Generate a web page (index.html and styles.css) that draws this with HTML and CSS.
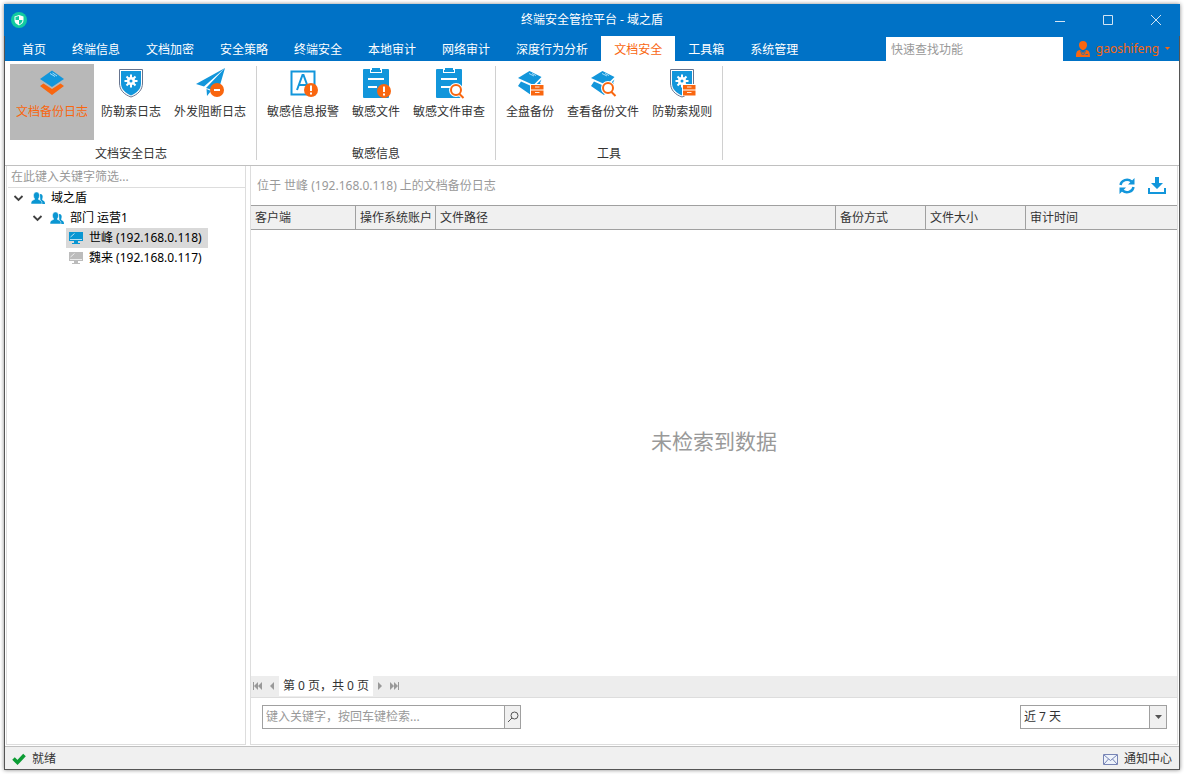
FILE: index.html
```html
<!DOCTYPE html>
<html lang="zh-CN">
<head>
<meta charset="utf-8">
<meta name="viewport" content="width=device-width, initial-scale=1">
<title>终端安全管控平台 - 域之盾</title>
<link rel="stylesheet" href="styles.css">
</head>
<body>
<svg class="defs" aria-hidden="true">
  <defs>
    <symbol id="shield" viewBox="0 0 32 32">
      <path d="M4.500 2.500H27.500V16C27.500 23 23 27.500 16 30C9 27.500 4.500 23 4.500 16Z" fill="#fff" stroke="#66748f" stroke-width="1"/>
      <path d="M6 4H26V16C26 22 22 26 16 28.500C10 26 6 22 6 16Z" fill="#1296db"/>
      <path d="M16 7.500V20.500M9.500 14H22.500M11.500 9.500L20.500 18.500M20.500 9.500L11.500 18.500" stroke="#fff" stroke-width="2"/>
      <circle cx="16" cy="14" r="4" fill="#fff"/>
      <circle cx="16" cy="14" r="1.500" fill="#1296db"/>
    </symbol>
    <symbol id="layers" viewBox="0 0 32 32">
      <path d="M15.500 4L27.500 10L19.500 18L4 11Z" fill="#1296db"/>
      <path d="M7 14.500L19.500 20L27.500 12.500L26 16L27 17L17 28L4 19Z" fill="#1296db"/>
      <path d="M15 6.500L20 9M18 6.500L22 8.500" stroke="#a6dcf7" stroke-width="1"/>
    </symbol>
    <symbol id="clipboard" viewBox="0 0 32 32">
      <path d="M4 2H28Q29 2 29 3V30Q29 31 28 31H4Q3 31 3 30V3Q3 2 4 2Z" fill="#1296db"/>
      <path d="M10 1H12V4H20V1H22V6H10Z" fill="#fff"/>
      <path d="M12 1H20V3H21V5H11V3H12Z" fill="#1296db"/>
      <path d="M8 12H24M8 20H17" stroke="#fff" stroke-width="2"/>
    </symbol>
    <symbol id="alert" viewBox="0 0 14 14">
      <circle cx="7" cy="7" r="7" fill="#f9660f"/>
      <path d="M7 2.500V8M7 9.500V11.500" stroke="#fff" stroke-width="2"/>
    </symbol>
    <symbol id="lens" viewBox="0 0 16 16">
      <path d="M10.500 11L14.500 15" stroke="#fff" stroke-width="4"/>
      <circle cx="7" cy="7" r="5" fill="#fff" stroke="#fff" stroke-width="4"/>
      <circle cx="7" cy="7" r="5" fill="#fff" stroke="#f9660f" stroke-width="2"/>
      <path d="M10.500 11L14.500 15" stroke="#f9660f" stroke-width="2"/>
    </symbol>
    <symbol id="drawer" viewBox="0 0 14 12">
      <path d="M0 0H14V12H0Z" fill="#fff"/>
      <path d="M1 1H13.500V5.500H1ZM1 6.500H13.500V11.500H1Z" fill="#f9660f"/>
      <path d="M5 3H9.500M5 8.500H9.500" stroke="#fff" stroke-width="1" opacity=".85"/>
    </symbol>
    <symbol id="people" viewBox="0 0 14 14">
      <path d="M9 3C11.500 3 12 5 11.500 7C11 8.500 11 9 12 9.500C13.500 10 14 11 14 13H9.500Z" fill="#0a96d2"/>
      <path d="M5.500 1C7.500 1 8.500 2.500 8.500 4.500C8.500 6 8 7 7.500 7.500V8.500C10 9.500 11 10 11 13H0C0 10 1 9.500 3.500 8.500V7.500C3 7 2.500 6 2.500 4.500C2.500 2.500 3.500 1 5.500 1Z" fill="#0a96d2" stroke="#fff" stroke-width=".5"/>
    </symbol>
    <symbol id="monitor" viewBox="0 0 14 14">
      <path d="M0 1H14V10H0ZM5 10H9V12H11V13H3V12H5Z" fill="currentColor"/>
      <path d="M1.500 6L5.500 2.500M1 8.500H13" stroke="#fff" stroke-width="1" opacity=".7"/>
    </symbol>
    <symbol id="chevron" viewBox="0 0 12 12">
      <path d="M2.500 4L6.500 8L10.500 4" fill="none" stroke="#404040" stroke-width="1.800"/>
    </symbol>
  </defs>
</svg>

<div class="window">
  <header class="titlebar">
    <svg class="app-logo" viewBox="0 0 16 16" aria-hidden="true">
      <circle cx="8" cy="8" r="8" fill="#12cba0"/>
      <path d="M8 3L12.500 4.500V8C12.500 10.500 11 12 8 13.500C5 12 3.500 10.500 3.500 8V4.500Z" fill="#fff"/>
      <path d="M8 4V8H4.500V5ZM8 8H11.500C11.500 10 10 11.500 8 12.500Z" fill="#12cba0"/>
    </svg>
    <h1 class="app-title">终端安全管控平台 - 域之盾</h1>
    <div class="window-buttons">
      <button class="window-button" type="button" aria-label="最小化"><svg viewBox="0 0 12 12"><path d="M1 7.500H11"/></svg></button>
      <button class="window-button" type="button" aria-label="最大化"><svg viewBox="0 0 12 12"><path d="M1.500 1.500H10.500V10.500H1.500Z"/></svg></button>
      <button class="window-button" type="button" aria-label="关闭"><svg viewBox="0 0 12 12"><path d="M1 1L11 11M11 1L1 11"/></svg></button>
    </div>
  </header>

  <div class="frame">
    <div class="menubar">
      <nav class="tabs">
        <a class="tab" href="#home">首页</a>
        <a class="tab" href="#info">终端信息</a>
        <a class="tab" href="#encrypt">文档加密</a>
        <a class="tab" href="#policy">安全策略</a>
        <a class="tab" href="#terminal">终端安全</a>
        <a class="tab" href="#local">本地审计</a>
        <a class="tab" href="#network">网络审计</a>
        <a class="tab" href="#behavior">深度行为分析</a>
        <a class="tab tab-active" href="#document" aria-current="page">文档安全</a>
        <a class="tab" href="#tools">工具箱</a>
        <a class="tab" href="#system">系统管理</a>
      </nav>
      <input class="quick-search" type="text" aria-label="快速查找功能" placeholder="快速查找功能">
      <button class="user" type="button">
        <svg class="user-icon" viewBox="0 0 14 16" aria-hidden="true">
          <path d="M7 0C9.500 0 11 1.500 11 4C11 6.500 9 9 7 9C5 9 3 6.500 3 4C3 1.500 4.500 0 7 0Z" fill="#f9660f"/>
          <path d="M4 9L7 12L10 9C13 9.500 14 11 14 16H0C0 11 1 9.500 4 9Z" fill="#f9660f"/>
          <path d="M4.500 10L6.500 14M9.500 10L7.500 14M9.500 13.500H12" stroke="#0072c6" stroke-width=".8"/>
        </svg>
        <span>gaoshifeng</span>
        <svg class="user-caret" viewBox="0 0 5 3" aria-hidden="true"><path d="M0 0H5L2.500 3Z" fill="#f9660f"/></svg>
      </button>
    </div>

    <div class="ribbon">
      <section class="group">
        <div class="tools">
          <button class="tool tool-active" type="button">
            <svg class="tool-icon" viewBox="0 0 32 32"><path d="M4 19L7.500 16.500L16 22L24.500 16.500L28 19L16 28Z" fill="#f9660f"/><path d="M16 3.500L28 12L16 20L4 12Z" fill="#1296db"/><path d="M14 6.500L19 9.500M16.500 6L21 9" stroke="#a6dcf7" stroke-width="1"/></svg>
            <span>文档备份日志</span>
          </button>
          <button class="tool" type="button">
            <svg class="tool-icon"><use href="#shield"/></svg>
            <span>防勒索日志</span>
          </button>
          <button class="tool" type="button">
            <svg class="tool-icon" viewBox="0 0 32 32"><path d="M31 1L2 17L10 19.500ZM31 1L12 21L24 25ZM12.500 22L17 24L13 29Z" fill="#1296db"/><circle cx="23" cy="23" r="7" fill="#f9660f"/><path d="M20 23H26" stroke="#fff" stroke-width="2"/></svg>
            <span>外发阻断日志</span>
          </button>
        </div>
        <h2 class="group-title">文档安全日志</h2>
      </section>
      <section class="group">
        <div class="tools">
          <button class="tool" type="button">
            <svg class="tool-icon" viewBox="0 0 32 32"><path d="M4.500 4.500H27.500V27.500H4.500Z" fill="#fff" stroke="#1296db" stroke-width="2"/><path d="M10 23L15.500 8H16.500L22 23M12 18H20" fill="none" stroke="#1296db" stroke-width="2"/><use href="#alert" x="17" y="16" width="14" height="14"/></svg>
            <span>敏感信息报警</span>
          </button>
          <button class="tool" type="button">
            <svg class="tool-icon" viewBox="0 0 32 32"><use href="#clipboard"/><use href="#alert" x="17" y="17" width="14" height="14"/></svg>
            <span>敏感文件</span>
          </button>
          <button class="tool" type="button">
            <svg class="tool-icon" viewBox="0 0 32 32"><use href="#clipboard"/><use href="#lens" x="16" y="16" width="16" height="16"/></svg>
            <span>敏感文件审查</span>
          </button>
        </div>
        <h2 class="group-title">敏感信息</h2>
      </section>
      <section class="group">
        <div class="tools">
          <button class="tool" type="button">
            <svg class="tool-icon" viewBox="0 0 32 32"><use href="#layers"/><use href="#drawer" x="16" y="17" width="14" height="12"/></svg>
            <span>全盘备份</span>
          </button>
          <button class="tool" type="button">
            <svg class="tool-icon" viewBox="0 0 32 32"><use href="#layers"/><use href="#lens" x="14" y="14" width="16" height="16"/></svg>
            <span>查看备份文件</span>
          </button>
          <button class="tool" type="button">
            <svg class="tool-icon" viewBox="0 0 32 32"><use href="#shield"/><use href="#drawer" x="16" y="17" width="14" height="12"/></svg>
            <span>防勒索规则</span>
          </button>
        </div>
        <h2 class="group-title">工具</h2>
      </section>
    </div>

    <div class="workspace">
      <aside class="tree-panel">
        <input class="tree-filter" type="text" aria-label="筛选" placeholder="在此键入关键字筛选...">
        <ul class="tree">
          <li>
            <div class="tree-row">
              <button class="toggle" type="button" aria-label="折叠 域之盾"><svg><use href="#chevron"/></svg></button>
              <button class="node" type="button"><svg><use href="#people"/></svg><span>域之盾</span></button>
            </div>
            <ul class="branch">
              <li>
                <div class="tree-row">
                  <button class="toggle" type="button" aria-label="折叠 部门 运营1"><svg><use href="#chevron"/></svg></button>
                  <button class="node" type="button"><svg><use href="#people"/></svg><span>部门 运营1</span></button>
                </div>
                <ul class="branch">
                  <li class="tree-row leaf"><button class="node node-online node-selected" type="button"><svg><use href="#monitor"/></svg><span>世峰 (192.168.0.118)</span></button></li>
                  <li class="tree-row leaf"><button class="node node-offline" type="button"><svg><use href="#monitor"/></svg><span>魏来 (192.168.0.117)</span></button></li>
                </ul>
              </li>
            </ul>
          </li>
        </ul>
      </aside>

      <main class="content">
        <div class="caption">
          <span>位于 世峰 (192.168.0.118) 上的文档备份日志</span>
          <div class="actions">
            <button class="action" type="button" aria-label="刷新"><svg viewBox="0 0 18 18"><path d="M2.500 8A6.500 6 0 0 1 13.500 4.500M15.500 10A6.500 6 0 0 1 4.500 13.500" fill="none" stroke="#1296db" stroke-width="2.400"/><path d="M16.500 1V7.500H10ZM1.500 17V10.500H8Z" fill="#1296db"/></svg></button>
            <button class="action" type="button" aria-label="下载"><svg viewBox="0 0 18 18"><path d="M7 0H11V6H15L9 12L3 6H7Z" fill="#1296db"/><path d="M1 11V16H17V11" fill="none" stroke="#1296db" stroke-width="2"/></svg></button>
          </div>
        </div>
        <table class="log-table">
          <colgroup><col class="col-client"><col class="col-account"><col class="col-path"><col class="col-method"><col class="col-size"><col></colgroup>
          <thead><tr><th scope="col">客户端</th><th scope="col">操作系统账户</th><th scope="col">文件路径</th><th scope="col">备份方式</th><th scope="col">文件大小</th><th scope="col">审计时间</th></tr></thead>
        </table>
        <p class="empty">未检索到数据</p>
        <div class="pager">
          <button class="page-button" type="button" aria-label="第一页"><svg viewBox="0 0 10 8"><path d="M0 0H1V8H0ZM5 0V8L1 4ZM9 0V8L5 4Z"/></svg></button>
          <button class="page-button" type="button" aria-label="上一页"><svg viewBox="0 0 10 8"><path d="M7 0V8L3 4Z"/></svg></button>
          <span class="page-info">第 0 页，共 0 页</span>
          <button class="page-button" type="button" aria-label="下一页"><svg viewBox="0 0 10 8"><path d="M3 0V8L7 4Z"/></svg></button>
          <button class="page-button" type="button" aria-label="最后一页"><svg viewBox="0 0 10 8"><path d="M9 0H10V8H9ZM1 0V8L5 4ZM5 0V8L9 4Z"/></svg></button>
        </div>
        <form class="query">
          <div class="search-box">
            <input class="search-input" type="text" aria-label="关键字" placeholder="键入关键字，按回车键检索...">
            <button class="search-button" type="button" aria-label="检索"><svg viewBox="0 0 12 12"><circle cx="7.500" cy="4.500" r="3.500"/><path d="M5 7L1 11"/></svg></button>
          </div>
          <div class="range">
            <select class="range-select" aria-label="时间范围"><option>近 7 天</option></select>
            <span class="range-arrow"><svg viewBox="0 0 7 4" aria-hidden="true"><path d="M0 0H7L3.500 4Z" fill="#555"/></svg></span>
          </div>
        </form>
      </main>
    </div>

    <footer class="statusbar">
      <span class="status"><svg class="status-icon" viewBox="0 0 14 14" aria-hidden="true"><path d="M1.500 6.500L5.500 10.500L12.500 3" fill="none" stroke="#0c9c34" stroke-width="3.600"/></svg>就绪</span>
      <button class="notice" type="button"><svg class="notice-icon" viewBox="0 0 15 11" aria-hidden="true"><path d="M.5 .5H14.500V10.500H.5Z" fill="#eef3fb" stroke="#7784b5"/><path d="M1 1L7.500 6.500L14 1M1 10L5.500 5M14 10L9.500 5" fill="none" stroke="#7784b5"/></svg>通知中心</button>
    </footer>
  </div>
</div>
</body>
</html>
```
FILE: styles.css
```css
* {
  box-sizing: border-box;
}

body {
  margin: 0;
  padding: 4px;
  height: 100vh;
  background: #fff;
  color: #333;
  font: 12px/18px "Noto Sans", "Noto Sans CJK SC", sans-serif;
}

button,
input,
select {
  margin: 0;
  padding: 0;
  border: 0;
  background: none;
  color: inherit;
  font: inherit;
}

input::placeholder {
  color: #999;
  opacity: 1;
}

h1,
h2,
p,
ul {
  margin: 0;
  padding: 0;
  font-size: 12px;
  font-weight: normal;
  list-style: none;
}

svg {
  display: block;
  flex: none;
}

.defs {
  position: absolute;
  width: 0;
  height: 0;
}

.window {
  display: flex;
  flex-direction: column;
  height: 100%;
  box-shadow: 0 0 4px #888;
}

/* Title bar */
.titlebar {
  display: grid;
  grid-template-columns: 1fr auto 1fr;
  align-items: center;
  flex: none;
  height: 32px;
  background: #0072c6;
  color: #fff;
}

.app-logo {
  width: 16px;
  height: 16px;
  margin-left: 7px;
}

.window-buttons {
  display: flex;
  justify-content: flex-end;
}

.window-button {
  display: grid;
  place-items: center;
  width: 48px;
  height: 32px;
}

.window-button svg {
  width: 12px;
  height: 12px;
  fill: none;
  stroke: #d2e4f3;
}

.frame {
  display: flex;
  flex: 1;
  flex-direction: column;
  min-height: 0;
  border: 1px solid #555;
  border-top: 0;
}

/* Menu */
.menubar {
  display: flex;
  flex: none;
  height: 25px;
  padding-left: 4px;
  background: #0072c6;
  color: #fff;
}

.tabs {
  display: flex;
  flex: 1;
}

.tab {
  padding: 0 13px;
  color: #fff;
  line-height: 28px;
  text-decoration: none;
  white-space: nowrap;
}

.tab-active {
  background: #fff;
  color: #f9660f;
}

.quick-search {
  width: 177px;
  height: 24px;
  margin-top: 1px;
  padding: 0 5px;
  background: #fff;
}

.user {
  display: flex;
  align-items: center;
  justify-content: center;
  gap: 6px;
  width: 116px;
  padding-left: 4px;
  color: #f9660f;
}

.user-icon {
  width: 14px;
  height: 16px;
}

.user-caret {
  width: 5px;
  height: 3px;
}

/* Ribbon */
.ribbon {
  display: flex;
  flex: none;
  height: 105px;
  padding: 3px 1px 5px;
  border-bottom: 1px solid #c0c0c0;
}

.group {
  display: flex;
  flex-direction: column;
  justify-content: space-between;
  padding: 0 4px;
  border-right: 1px solid;
  border-image: linear-gradient(transparent 3px, #d0d0d0 3px) 1;
}

.tools {
  display: flex;
  gap: 1px;
}

.tool {
  display: flex;
  flex-direction: column;
  align-items: center;
  gap: 4px;
  height: 76px;
  padding: 3px 6px 0;
  white-space: nowrap;
}

.tool-active {
  background: #b8b8b8;
  color: #f9660f;
}

.tool-icon {
  width: 32px;
  height: 32px;
}

.group-title {
  line-height: 12px;
  text-align: center;
}

/* Workspace */
.workspace {
  display: flex;
  flex: 1;
  gap: 4px;
  min-height: 0;
  padding: 0 1px 1px;
}

.tree-panel {
  flex: none;
  width: 240px;
  border: 1px solid #ddd;
  border-top: 0;
  color: #000;
}

.tree-filter {
  display: block;
  width: calc(100% - 1px);
  height: 22px;
  margin-left: 1px;
  padding: 0 3px;
  border-bottom: 1px solid #ddd;
}

.tree {
  padding-left: 5px;
}

.branch {
  padding-left: 19px;
}

.tree-row {
  display: flex;
  gap: 4px;
  height: 20px;
}

.leaf {
  padding-left: 16px;
}

.toggle svg {
  width: 12px;
  height: 12px;
}

.node {
  display: flex;
  align-items: center;
  gap: 6px;
  padding: 0 6px 0 3px;
  white-space: nowrap;
}

.node svg {
  width: 14px;
  height: 14px;
}

.node-selected {
  background: #d9d9d9;
}

.node-online svg {
  color: #0a96d2;
}

.node-offline svg {
  color: #bcbcbc;
}

/* Log list */
.content {
  display: flex;
  flex: 1;
  flex-direction: column;
  min-width: 0;
  border: 1px solid #ddd;
  border-top: 0;
}

.caption {
  display: flex;
  align-items: center;
  justify-content: space-between;
  flex: none;
  height: 39px;
  padding: 1px 11px 0 6px;
  color: #999;
}

.actions {
  display: flex;
  gap: 12px;
}

.action svg {
  width: 18px;
  height: 18px;
}

.log-table {
  flex: none;
  width: 100%;
  border-spacing: 0;
  table-layout: fixed;
}

.log-table th {
  height: 25px;
  padding: 0 4px;
  border: 1px solid #a0a0a0;
  border-left: 0;
  background: #f0f0f0;
  font-weight: normal;
  text-align: left;
  white-space: nowrap;
}

.log-table th:last-child {
  border-right: 0;
}

.col-client {
  width: 105px;
}

.col-account {
  width: 80px;
}

.col-path {
  width: 400px;
}

.col-method {
  width: 90px;
}

.col-size {
  width: 100px;
}

.empty {
  display: grid;
  flex: 1;
  place-items: center;
  padding-bottom: 24px;
  color: #999;
  font-size: 21px;
  line-height: 30px;
}

.pager {
  display: flex;
  align-items: flex-start;
  flex: none;
  height: 22px;
  border-bottom: 1px solid #ddd;
  background: #ededed;
}

.page-button {
  display: grid;
  place-items: center;
  width: 14px;
  height: 20px;
}

.page-button svg {
  width: 10px;
  height: 8px;
  fill: #999;
}

.page-info {
  min-width: 94px;
  background: #fff;
  line-height: 20px;
  text-align: center;
  white-space: nowrap;
}

.query {
  display: flex;
  justify-content: space-between;
  flex: none;
  height: 46px;
  padding: 7px 10px 15px 11px;
}

.search-box {
  display: flex;
  width: 259px;
  border: 1px solid #a0a0a0;
}

.search-input {
  flex: 1;
  min-width: 0;
  padding: 0 3px;
}

.search-button {
  display: grid;
  place-items: center;
  width: 16px;
  border-left: 1px solid #a0a0a0;
  background: #f0f0f0;
}

.search-button svg {
  width: 12px;
  height: 12px;
  fill: none;
  stroke: #555;
}

.range {
  display: grid;
  grid-template-columns: 1fr 17px;
  width: 147px;
  border: 1px solid #a0a0a0;
}

.range-select {
  grid-row: 1;
  grid-column: 1 / 3;
  padding: 0 3px;
  border-radius: 0;
  appearance: none;
}

.range-arrow {
  display: grid;
  grid-row: 1;
  grid-column: 2;
  place-items: center;
  border-left: 1px solid #a0a0a0;
  background: #f0f0f0;
  pointer-events: none;
}

.range-arrow svg {
  width: 7px;
  height: 4px;
}

/* Status bar */
.statusbar {
  display: flex;
  align-items: center;
  justify-content: space-between;
  flex: none;
  height: 23px;
  padding: 2px 7px 0;
  border-top: 1px solid #c0c0c0;
  background: #f0f0f0;
}

.status,
.notice {
  display: flex;
  align-items: center;
  gap: 6px;
}

.status-icon {
  width: 14px;
  height: 14px;
}

.notice-icon {
  width: 15px;
  height: 11px;
}
```
